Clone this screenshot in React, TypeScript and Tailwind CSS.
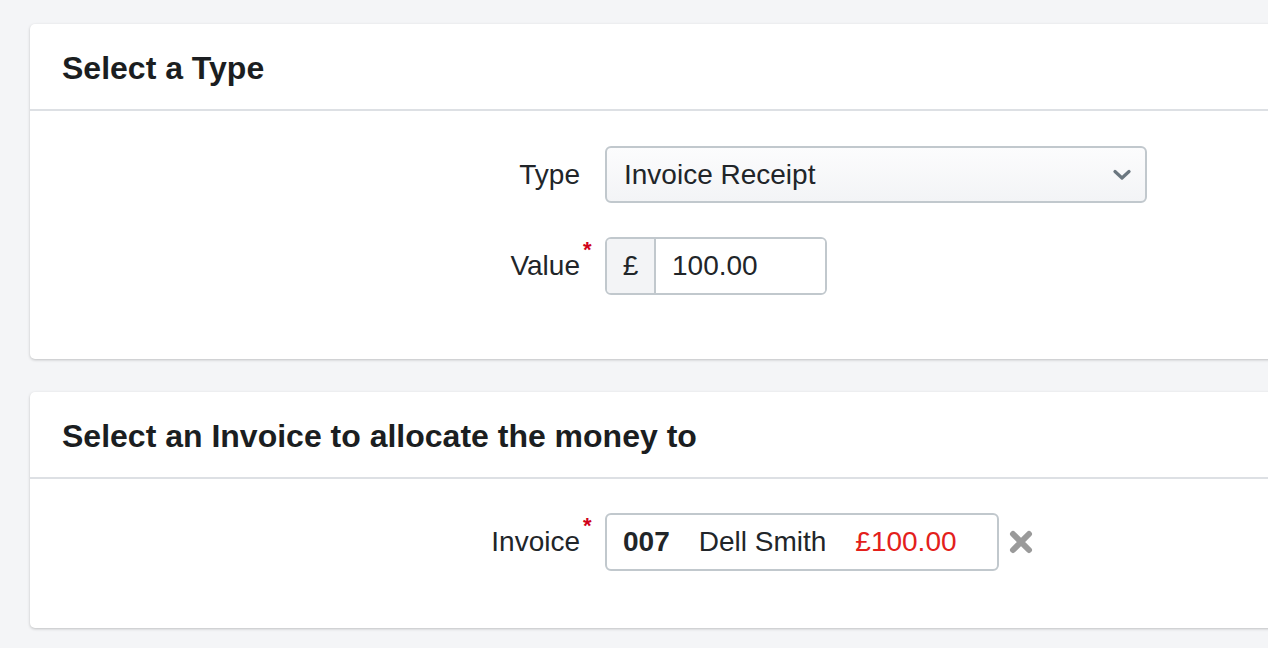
import React from 'react';

const font = { fontFamily: '"Liberation Sans", Arial, Helvetica, sans-serif' };

const Card: React.FC<{ title: string; className?: string; children: React.ReactNode }> = ({
  title,
  className = '',
  children,
}) => (
  <section
    className={`w-[1270px] rounded-l-[5px] bg-white shadow-[0_1px_3px_rgba(0,0,0,0.22)] ${className}`}
  >
    <header className="h-[87px] border-b-2 border-[#dde0e4] pl-[32px] pt-[26px]">
      <h2 className="text-[32px] font-bold leading-[37px] text-[#1b1e21]">{title}</h2>
    </header>
    {children}
  </section>
);

const FieldRow: React.FC<{ label: string; required?: boolean; children: React.ReactNode }> = ({
  label,
  required,
  children,
}) => (
  <div className="flex items-center">
    <div className="w-[550px] text-right">
      <span className="relative text-[28px] text-[#212529]">
        {label}
        {required && (
          <span className="absolute -top-[17px] left-full ml-[3px] text-[22px] font-bold text-[#d0021b]">
            *
          </span>
        )}
      </span>
    </div>
    <div className="ml-[25px]">{children}</div>
  </div>
);

export default function App() {
  return (
    <div className="min-h-[648px] w-full overflow-hidden bg-[#f4f5f7] pt-[24px] pl-[30px]" style={font}>
      <Card title="Select a Type">
        <div className="flex flex-col gap-[34px] pt-[35px] pb-[64px]">
          <FieldRow label="Type">
            <div className="flex h-[57px] w-[542px] items-center justify-between rounded-[6px] border-2 border-[#c1c8cd] bg-gradient-to-b from-[#fcfcfd] to-[#f3f4f6] pl-[17px] pr-[14px]">
              <span className="text-[28px] text-[#212529]">Invoice Receipt</span>
              <svg width="18" height="12" viewBox="0 0 18 12" fill="none">
                <path d="M2 2.5 L9 9 L16 2.5" stroke="#6b7780" strokeWidth="3.2" strokeLinecap="round" strokeLinejoin="round" />
              </svg>
            </div>
          </FieldRow>
          <FieldRow label="Value" required>
            <div className="flex h-[58px] w-[222px] overflow-hidden rounded-[6px] border-2 border-[#c1c8cd]">
              <div className="flex w-[49px] items-center justify-center border-r-2 border-[#c1c8cd] bg-[#f3f4f6] text-[28px] text-[#212529]">
                £
              </div>
              <div className="flex flex-1 items-center bg-white pl-[16px] text-[28px] text-[#212529]">100.00</div>
            </div>
          </FieldRow>
        </div>
      </Card>

      <Card title="Select an Invoice to allocate the money to" className="mt-[33px]">
        <div className="pt-[34px] pb-[57px]">
          <FieldRow label="Invoice" required>
            <div className="flex items-center">
              <div className="flex h-[58px] w-[394px] items-center rounded-[6px] border-2 border-[#c1c8cd] bg-white pl-[16px] text-[28px]">
                <span className="font-bold text-[#212529]">007</span>
                <span className="ml-[29px] text-[#212529]">Dell Smith</span>
                <span className="ml-[29px] text-[#e3201b]">£100.00</span>
              </div>
              <svg className="ml-[10px]" width="24" height="24" viewBox="0 0 24 24">
                <path d="M4 4 L20 20 M20 4 L4 20" stroke="#9a9a9a" strokeWidth="6" strokeLinecap="round" />
              </svg>
            </div>
          </FieldRow>
        </div>
      </Card>
    </div>
  );
}
